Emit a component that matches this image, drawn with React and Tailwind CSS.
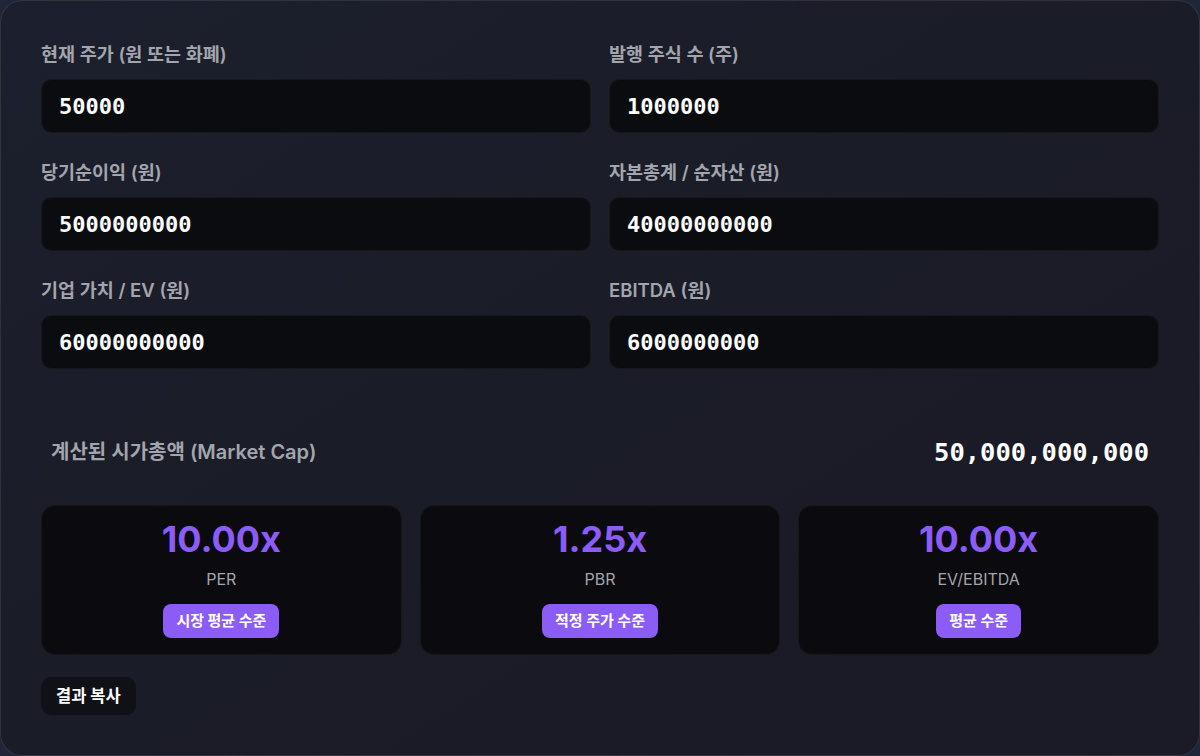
import { useState } from "react";

const FIELDS = [
  { key: "price", label: "현재 주가 (원 또는 화폐)", value: "50000" },
  { key: "shares", label: "발행 주식 수 (주)", value: "1000000" },
  { key: "netIncome", label: "당기순이익 (원)", value: "5000000000" },
  { key: "equity", label: "자본총계 / 순자산 (원)", value: "40000000000" },
  { key: "ev", label: "기업 가치 / EV (원)", value: "60000000000" },
  { key: "ebitda", label: "EBITDA (원)", value: "6000000000" },
];

const sans = "font-['Inter','Noto_Sans_CJK_KR',sans-serif]";
const mono = "font-['DejaVu_Sans_Mono','Noto_Sans_CJK_KR',monospace]";

export default function App() {
  const [values, setValues] = useState(
    Object.fromEntries(FIELDS.map((f) => [f.key, f.value]))
  );

  const n = (k) => Number(values[k]) || 0;
  const marketCap = n("price") * n("shares");
  const per = n("netIncome") ? marketCap / n("netIncome") : 0;
  const pbr = n("equity") ? marketCap / n("equity") : 0;
  const evEbitda = n("ebitda") ? n("ev") / n("ebitda") : 0;

  const metrics = [
    { name: "PER", value: per, badge: "시장 평균 수준" },
    { name: "PBR", value: pbr, badge: "적정 주가 수준" },
    { name: "EV/EBITDA", value: evEbitda, badge: "평균 수준" },
  ];

  return (
    <div className={`h-[756px] w-[1200px] bg-[#1f2638] ${sans}`}>
      <div className="h-full rounded-[22px] border border-white/10 bg-gradient-to-br from-[#1c1f2d] via-[#1a1c27] to-[#1b1a27] pl-10 pr-[40px] pt-[40px]">
        <div className="grid grid-cols-2 gap-x-[18px] gap-y-[26px]">
          {FIELDS.map((f) => (
            <div key={f.key}>
              <label className="block h-[26px] text-[18.5px] font-semibold leading-[26px] text-[#a3a5ad]">
                {f.label}
              </label>
              <input
                value={values[f.key]}
                onChange={(e) =>
                  setValues({ ...values, [f.key]: e.target.value })
                }
                className={`mt-3 h-[54px] w-full rounded-[10px] border border-white/5 bg-[#0b0c10] px-[17px] text-[22px] font-semibold text-white outline-none ${mono}`}
              />
            </div>
          ))}
        </div>

        <div className="mt-[63px] flex h-10 items-center justify-between px-[10px]">
          <span className="text-[20px] font-semibold text-[#a3a5ad]">
            계산된 시가총액 (Market Cap)
          </span>
          <span className={`text-[25.5px] font-bold text-white ${mono}`}>
            {marketCap.toLocaleString("en-US")}
          </span>
        </div>

        <div className="mt-[33px] grid grid-cols-3 gap-[18px]">
          {metrics.map((m) => (
            <div
              key={m.name}
              className="flex h-[150px] flex-col items-center rounded-[14px] border border-white/5 bg-[#0b0b0f] pt-[11px]"
            >
              <p className="text-[36px] font-bold leading-[44px] text-[#8b5cf6]">
                {m.value.toFixed(2)}x
              </p>
              <p className="mt-[8px] text-[16px] leading-5 text-[#a3a5ad]">
                {m.name}
              </p>
              <span className="mt-[15px] rounded-lg bg-[#8b5cf6] px-[13px] py-[6px] text-[15px] font-bold leading-[22px] text-white">
                {m.badge}
              </span>
            </div>
          ))}
        </div>

        <button className="mt-[22px] h-[38px] rounded-[10px] bg-[#0f1116] px-[15px] text-[16.5px] font-bold text-white">
          결과 복사
        </button>
      </div>
    </div>
  );
}
